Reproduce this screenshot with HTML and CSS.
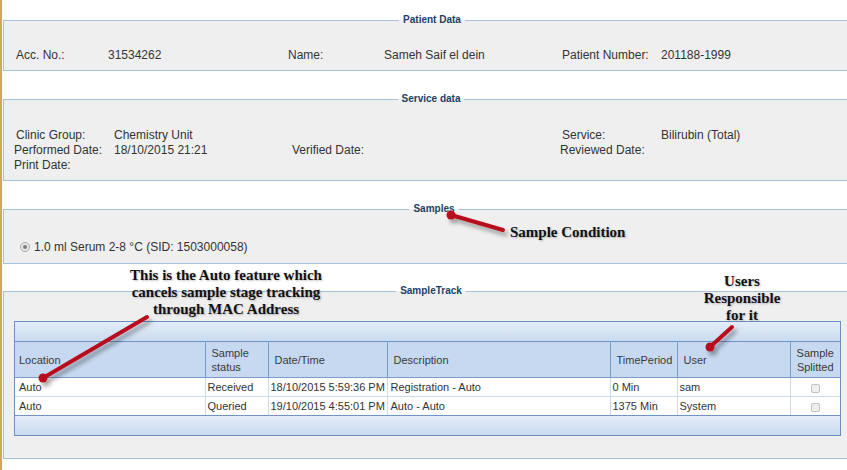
FILE: index.html
```html
<!DOCTYPE html>
<html>
<head>
<meta charset="utf-8">
<title>Sample Track</title>
<link rel="stylesheet" href="styles.css">
</head>
<body>
<div class="page">
  <fieldset class="box box-patient">
    <legend>Patient Data</legend>
    <div class="grid grid-patient">
      <span>Acc. No.:</span><span>31534262</span>
      <span>Name:</span><span>Sameh Saif el dein</span>
      <span>Patient Number:</span><span>201188-1999</span>
    </div>
  </fieldset>

  <fieldset class="box box-service">
    <legend>Service data</legend>
    <div class="grid grid-service">
      <span class="ind">Clinic Group:</span><span>Chemistry Unit</span><span></span>
      <span class="ind">Service:</span><span>Bilirubin (Total)</span>
      <span>Performed Date:</span><span>18/10/2015 21:21</span><span>Verified Date:</span>
      <span>Reviewed Date:</span><span></span>
      <span>Print Date:</span><span></span><span></span><span></span><span></span>
    </div>
  </fieldset>

  <fieldset class="box box-samples">
    <legend>Samples</legend>
    <div class="sample-row">
      <span class="radio"><span class="radio-dot"></span></span>
      <span>1.0 ml Serum 2-8 °C (SID: 1503000058)</span>
    </div>
  </fieldset>

  <fieldset class="box box-track">
    <legend>SampleTrack</legend>
    <div class="grid-wrap">
      <div class="bar bar-top"></div>
      <table class="track">
        <colgroup>
          <col class="c1"><col class="c2"><col class="c3"><col class="c4"><col class="c5"><col class="c6"><col class="c7">
        </colgroup>
        <thead>
          <tr>
            <th class="first">Location</th>
            <th>Sample<br>status</th>
            <th>Date/Time</th>
            <th>Description</th>
            <th>TimePeriod</th>
            <th>User</th>
            <th class="center">Sample<br>Splitted</th>
          </tr>
        </thead>
        <tbody>
          <tr>
            <td class="first">Auto</td>
            <td>Received</td>
            <td>18/10/2015 5:59:36 PM</td>
            <td class="desc">Registration - Auto</td>
            <td>0 Min</td>
            <td>sam</td>
            <td class="center"><span class="check"></span></td>
          </tr>
          <tr>
            <td class="first">Auto</td>
            <td>Queried</td>
            <td>19/10/2015 4:55:01 PM</td>
            <td class="desc">Auto - Auto</td>
            <td>1375 Min</td>
            <td>System</td>
            <td class="center"><span class="check"></span></td>
          </tr>
        </tbody>
      </table>
      <div class="bar bar-bottom"></div>
    </div>
  </fieldset>
</div>

<svg class="arrows" width="847" height="470" viewBox="0 0 847 470">
  <defs>
    <filter id="sh" x="-30%" y="-30%" width="160%" height="160%">
      <feDropShadow dx="3" dy="4" stdDeviation="2" flood-color="#000" flood-opacity="0.35"/>
    </filter>
  </defs>
  <g filter="url(#sh)" stroke="#b8101c" stroke-width="4" stroke-linecap="round" fill="#b8101c">
    <line x1="43" y1="378" x2="147" y2="317"/>
    <circle cx="43" cy="378" r="4.5" stroke="none"/>
    <line x1="451" y1="215" x2="503" y2="230"/>
    <circle cx="451" cy="215" r="4.5" stroke="none"/>
    <line x1="710" y1="347" x2="732" y2="327"/>
    <circle cx="710" cy="347" r="4.5" stroke="none"/>
  </g>
</svg>

<div class="note note-auto">This is the Auto feature which<br>cancels sample stage tracking<br>through MAC Address</div>
<div class="note note-users">Users<br>Responsible<br>for it</div>
<div class="note note-cond">Sample Condition</div>
</body>
</html>
```

FILE: styles.css
```css
html, body {
  margin: 0;
  padding: 0;
  overflow: hidden;
  background: #fff;
}
body {
  position: relative;
  width: 847px;
  height: 470px;
  font-family: "Liberation Sans", Arial, sans-serif;
  font-size: 12px;
  color: #333;
}
.page {
  width: 847px;
  height: 470px;
  box-sizing: border-box;
  border-left: 2px solid #cfa955;
  padding-top: 15px;
}
.box {
  margin: 0 0 22px 1px;
  width: 846px;
  min-width: 0;
  box-sizing: border-box;
  border: 1px solid #a7c2df;
  background: #efefef;
}
.box legend {
  margin: 0 auto;
  padding: 0 4px;
  font-weight: bold;
  font-size: 10px;
  line-height: 10px;
  color: #1d3f68;
}
.box-patient { padding: 23px 0 7px 12px; margin-bottom: 23px; }
.box-service { padding: 24px 0 7px 10px; margin-bottom: 23px; }
.box-samples { padding: 25px 0 8px 16px; }
.box-track { padding: 25px 0 22px 10px; }

.grid {
  display: grid;
  line-height: 15px;
  white-space: nowrap;
}
.grid-patient { grid-template-columns: 92px 180px 96px 178px 99px 1fr; }
.grid-service { grid-template-columns: 100px 178px 268px 101px 1fr; }
.ind { padding-left: 2px; }

.sample-row {
  display: flex;
  align-items: center;
  gap: 4px;
  height: 16px;
}
.radio {
  width: 10px;
  height: 10px;
  box-sizing: border-box;
  border: 1px solid #a8a8a8;
  border-radius: 50%;
  background: #e8e8e8;
  display: flex;
  align-items: center;
  justify-content: center;
}
.radio-dot {
  width: 4px;
  height: 4px;
  border-radius: 50%;
  background: #7d7d7d;
}

.grid-wrap {
  width: 827px;
  box-sizing: border-box;
  border: 1px solid #6b90c0;
  background: #fff;
}
.bar {
  height: 19px;
  background: linear-gradient(#e4edf8, #c9dbf0);
}
.bar-top { border-bottom: 1px solid #7095c5; }
.bar-bottom { border-top: 1px solid #7095c5; height: 19px; }

.track {
  width: 825px;
  border-collapse: collapse;
  table-layout: fixed;
  font-size: 11px;
}
.c1 { width: 190px; }
.c2 { width: 63px; }
.c3 { width: 119px; }
.c4 { width: 223px; }
.c5 { width: 67px; }
.c6 { width: 113px; }
.c7 { width: 50px; }

.track th {
  height: 35px;
  padding: 0 0 0 6px;
  background: #c6d9f1;
  font-weight: normal;
  text-align: left;
  line-height: 14px;
  color: #3a3a3a;
  border-left: 1px solid #7a9ccb;
  border-bottom: 1px solid #7a9ccb;
}
.track td {
  height: 18px;
  padding: 0 0 0 2px;
  line-height: 18px;
  color: #333;
  white-space: nowrap;
  overflow: hidden;
  border-left: 1px solid #cddaeb;
  border-bottom: 1px solid #cddaeb;
}
.track tbody tr:last-child td { border-bottom: none; }
.track .first { border-left: none; padding-left: 4px; }
.track td.desc { padding-left: 3px; }
.track .center { text-align: center; padding-left: 0; }

.check {
  display: inline-block;
  width: 9px;
  height: 9px;
  vertical-align: middle;
  box-sizing: border-box;
  border: 1px solid #c2c2c2;
  border-radius: 2px;
  background: #efefef;
}

.arrows {
  position: absolute;
  left: 0;
  top: 0;
  pointer-events: none;
}
.note {
  position: absolute;
  font-family: "Liberation Serif", "Times New Roman", serif;
  font-weight: bold;
  font-size: 15px;
  line-height: 17px;
  color: #111;
  text-align: center;
  white-space: nowrap;
  text-shadow: 1px 1px 2px rgba(0, 0, 0, 0.25);
}
.note-auto { left: 116px; top: 267px; width: 220px; }
.note-users { left: 692px; top: 273px; width: 100px; }
.note-cond { left: 510px; top: 224px; text-align: left; }
```
